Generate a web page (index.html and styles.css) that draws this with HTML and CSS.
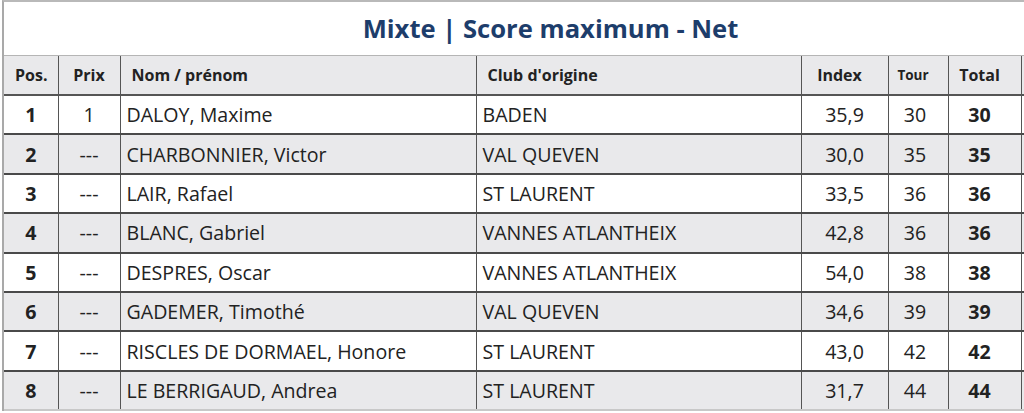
FILE: index.html
```html
<!DOCTYPE html>
<html lang="fr">
<head>
<meta charset="utf-8">
<link rel="stylesheet" href="styles.css">
</head>
<body>
<div class="board">
  <h1 class="title">Mixte | Score maximum - Net</h1>
  <table class="results">
    <colgroup>
      <col class="c-pos"><col class="c-prix"><col class="c-nom"><col class="c-club"><col class="c-index"><col class="c-tour"><col class="c-total"><col class="c-extra">
    </colgroup>
    <thead>
      <tr>
        <th class="center">Pos.</th>
        <th class="center">Prix</th>
        <th class="left">Nom / prénom</th>
        <th class="left">Club d'origine</th>
        <th class="num">Index</th>
        <th class="num small">Tour</th>
        <th class="num">Total</th>
        <th></th>
      </tr>
    </thead>
    <tbody>
      <tr><td class="pos">1</td><td class="center">1</td><td>DALOY, Maxime</td><td>BADEN</td><td class="center">35,9</td><td class="tour">30</td><td class="total">30</td><td></td></tr>
      <tr class="alt"><td class="pos">2</td><td class="center">---</td><td>CHARBONNIER, Victor</td><td>VAL QUEVEN</td><td class="center">30,0</td><td class="tour">35</td><td class="total">35</td><td></td></tr>
      <tr><td class="pos">3</td><td class="center">---</td><td>LAIR, Rafael</td><td>ST LAURENT</td><td class="center">33,5</td><td class="tour">36</td><td class="total">36</td><td></td></tr>
      <tr class="alt"><td class="pos">4</td><td class="center">---</td><td>BLANC, Gabriel</td><td>VANNES ATLANTHEIX</td><td class="center">42,8</td><td class="tour">36</td><td class="total">36</td><td></td></tr>
      <tr><td class="pos">5</td><td class="center">---</td><td>DESPRES, Oscar</td><td>VANNES ATLANTHEIX</td><td class="center">54,0</td><td class="tour">38</td><td class="total">38</td><td></td></tr>
      <tr class="alt"><td class="pos">6</td><td class="center">---</td><td>GADEMER, Timothé</td><td>VAL QUEVEN</td><td class="center">34,6</td><td class="tour">39</td><td class="total">39</td><td></td></tr>
      <tr><td class="pos">7</td><td class="center">---</td><td>RISCLES DE DORMAEL, Honore</td><td>ST LAURENT</td><td class="center">43,0</td><td class="tour">42</td><td class="total">42</td><td></td></tr>
      <tr class="alt"><td class="pos">8</td><td class="center">---</td><td>LE BERRIGAUD, Andrea</td><td>ST LAURENT</td><td class="center">31,7</td><td class="tour">44</td><td class="total">44</td><td></td></tr>
    </tbody>
  </table>
</div>
</body>
</html>
```

FILE: styles.css
```css
html, body {
  margin: 0;
  padding: 0;
  background: #ffffff;
  overflow: hidden;
}

body {
  font-family: "Open Sans", "Noto Sans", sans-serif;
  color: #222222;
  padding-left: 2px;
}

.board {
  width: 1093px;
  border-top: 2px solid #b9b9b9;
  border-left: 2px solid #a9a9a9;
}

.title {
  margin: 0;
  height: 54px;
  display: flex;
  align-items: center;
  justify-content: center;
  font-size: 25.6px;
  font-weight: 700;
  color: #1d3d6b;
  border-bottom: 1px solid #b5b5b5;
  box-sizing: border-box;
}

.results {
  width: 1093px;
  table-layout: fixed;
  border-collapse: collapse;
}

.c-pos { width: 54px; }
.c-prix { width: 62px; }
.c-nom { width: 356px; }
.c-club { width: 325px; }
.c-index { width: 87px; }
.c-tour { width: 60px; }
.c-total { width: 73px; }
.c-extra { width: 76px; }

.results th,
.results td {
  border-left: 1px solid #555555;
  border-bottom: 2px solid #4a4a4a;
  white-space: nowrap;
  overflow: hidden;
}

.results tr > :first-child {
  border-left: none;
}

.results th {
  height: 38px;
  padding: 0 11px;
  background: #e9e9eb;
  font-size: 16px;
  font-weight: 700;
  border-bottom: 2px solid #555555;
}

.results td {
  height: 37.4px;
  padding: 0 6px;
  font-size: 19.6px;
  font-weight: 400;
  background: #ffffff;
}

.results tr.alt td {
  background: #e9e9eb;
}

.results tbody tr:last-child td {
  border-bottom: 2px solid #c8c8c8;
}

.results .center { text-align: center; }
.results .left { text-align: left; }

.results th.num {
  text-align: center;
  padding: 0 15px 0 5px;
}

.results th.small { font-size: 13.5px; }

.results td.pos {
  text-align: center;
  font-weight: 700;
}

.results td.tour {
  text-align: center;
  padding: 0 10px 0 4px;
}

.results td.total {
  text-align: center;
  font-weight: 700;
  padding: 0 14px 0 4px;
}
```
